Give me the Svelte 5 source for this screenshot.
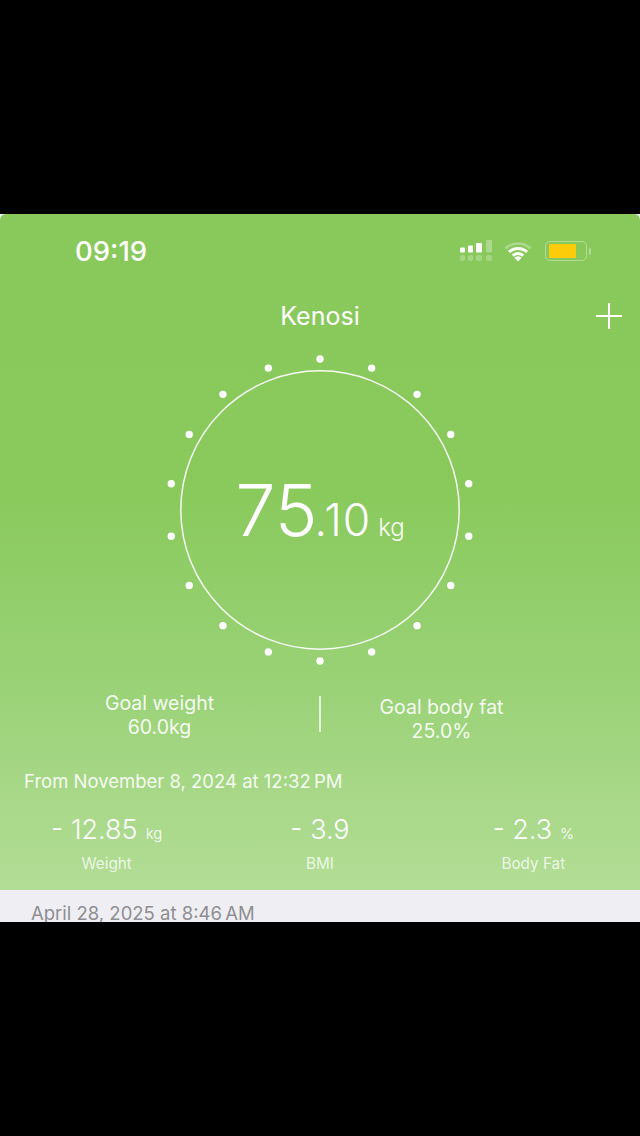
<script>
  const dots = Array.from({ length: 18 }, (_, i) => {
    const a = (i * 20 * Math.PI) / 180
    return { cx: 160 + 151 * Math.sin(a), cy: 160 - 151 * Math.cos(a) }
  })

  const stats = [
    { value: '- 12.85', unit: 'kg', label: 'Weight' },
    { value: '- 3.9', unit: '', label: 'BMI' },
    { value: '- 2.3', unit: '%', label: 'Body Fat' }
  ]
</script>

<div class="screen">
  <section class="hero">
    <div class="status">
      <span class="time">09:19</span>
      <div class="status-icons">
        <svg class="signal" width="34" height="24" viewBox="0 0 34 24">
          <g fill="#fff">
            <rect x="1" y="8.5" width="5" height="5" rx="1" />
            <rect x="9" y="6.5" width="5" height="7" rx="1" />
            <rect x="17" y="4" width="6" height="9.5" rx="1" />
          </g>
          <rect x="27" y="1" width="6" height="12.5" rx="1" fill="#fff" opacity=".3" />
          <g fill="#fff" opacity=".25">
            <rect x="1" y="16" width="5" height="6" rx="2" />
            <rect x="9" y="16" width="5" height="6" rx="2" />
            <rect x="17" y="16" width="6" height="6" rx="2" />
            <rect x="27" y="16" width="6" height="6" rx="2" />
          </g>
        </svg>
        <svg class="wifi" width="28" height="24" viewBox="0 0 28 24">
          <path d="M1.5 9.5a18 18 0 0 1 25 0" fill="none" stroke="#fff" stroke-width="2.6" opacity=".3" />
          <path d="M5 13a13 13 0 0 1 18 0" fill="none" stroke="#fff" stroke-width="3" />
          <path d="M8.8 16.6a7.5 7.5 0 0 1 10.4 0" fill="none" stroke="#fff" stroke-width="3" />
          <path d="M14 22.5l-3.6-3.8a5 5 0 0 1 7.2 0z" fill="#fff" />
        </svg>
        <div class="battery">
          <div class="battery-body"><div class="battery-fill"></div></div>
          <div class="battery-cap"></div>
        </div>
      </div>
    </div>

    <header class="title-bar">
      <h1>Kenosi</h1>
      <svg class="add" width="28" height="28" viewBox="0 0 28 28">
        <path d="M14 1v26M1 14h26" stroke="#fff" stroke-width="2" fill="none" />
      </svg>
    </header>

    <div class="gauge">
      <svg class="ring" width="320" height="320" viewBox="0 0 320 320">
        <circle cx="160" cy="160" r="139.2" fill="none" stroke="#fff" stroke-opacity=".92" stroke-width="1.5" />
        {#each dots as d}
          <circle cx={d.cx} cy={d.cy} r="3.7" fill="#fff" />
        {/each}
      </svg>
      <div class="reading">
        <span class="whole">75</span><span class="decimal">.10</span><span class="kg">kg</span>
      </div>
    </div>

    <div class="goals">
      <div class="goal">
        <div>Goal weight</div>
        <div>60.0kg</div>
      </div>
      <div class="divider"></div>
      <div class="goal second">
        <div>Goal body fat</div>
        <div>25.0%</div>
      </div>
    </div>

    <p class="from">From November 8, 2024 at 12:32&#8239;PM</p>

    <div class="stats">
      {#each stats as s}
        <div class="stat">
          <div class="stat-value">{s.value}{#if s.unit}<span class="stat-unit">{s.unit}</span>{/if}</div>
          <div class="stat-label">{s.label}</div>
        </div>
      {/each}
    </div>
  </section>

  <div class="list-head">April 28, 2025 at 8:46&#8239;AM</div>
</div>

<style>
  :global(body) {
    background: #000;
  }

  .screen {
    margin-top: 214px;
    width: 640px;
    height: 708px;
    overflow: hidden;
    background: #efeef2;
    font-family: Inter, "Liberation Sans", sans-serif;
    color: #fff;
  }

  .hero {
    height: 676px;
    display: flex;
    flex-direction: column;
    border-radius: 6px 6px 0 0;
    background: linear-gradient(180deg, #89c95b 0%, #8aca5d 42%, #9ad277 70%, #b3dd96 100%);
  }

  .status {
    height: 74px;
    display: flex;
    align-items: center;
    justify-content: space-between;
    padding: 0 49px 0 75px;
  }

  .time {
    font-size: 27.5px;
    font-weight: 500;
  }

  .status-icons {
    display: flex;
    align-items: center;
    gap: 9px;
  }

  .signal {
    margin-right: 2px;
  }

  .wifi {
    margin-right: 4px;
  }

  .battery {
    display: flex;
    align-items: center;
    gap: 2px;
  }

  .battery-body {
    box-sizing: content-box;
    width: 34px;
    height: 14px;
    padding: 2px 3px;
    border: 1.5px solid rgba(255, 255, 255, 0.35);
    border-radius: 5px;
  }

  .battery-fill {
    width: 27px;
    height: 100%;
    background: #fccb0a;
    border-radius: 1px;
  }

  .battery-cap {
    width: 2px;
    height: 7px;
    background: rgba(255, 255, 255, 0.35);
    border-radius: 0 2px 2px 0;
  }

  .title-bar {
    position: relative;
    height: 56px;
    display: flex;
    align-items: center;
    justify-content: center;
  }

  h1 {
    margin: 0;
    font-size: 25px;
    font-weight: 400;
  }

  .add {
    position: absolute;
    right: 17px;
    top: 14px;
  }

  .gauge {
    position: relative;
    height: 320px;
    margin-top: 6px;
    display: flex;
    align-items: center;
    justify-content: center;
  }

  .ring {
    position: absolute;
    left: 160px;
    top: 0;
  }

  .reading {
    display: flex;
    align-items: baseline;
    font-weight: 340;
  }

  .whole {
    font-size: 72px;
    line-height: 80px;
  }

  .decimal {
    font-size: 44.5px;
    margin-left: -3px;
    letter-spacing: 1px;
    font-weight: 300;
  }

  .kg {
    font-size: 24px;
    margin-left: 7px;
    font-weight: 300;
    color: rgba(255, 255, 255, 0.95);
  }

  .goals {
    display: grid;
    grid-template-columns: 319px 2px 241px;
    height: 48px;
    margin-top: 21px;
  }

  .goal {
    text-align: center;
    font-size: 19.5px;
    line-height: 24px;
    color: rgba(255, 255, 255, 0.92);
  }

  .goal.second {
    margin-top: 4px;
  }

  .divider {
    margin-top: 5px;
    height: 36px;
    background: rgba(255, 255, 255, 0.75);
    width: 1.5px;
  }

  .from {
    margin: 30px 0 0 24px;
    font-size: 18.5px;
    line-height: 24px;
    color: rgba(255, 255, 255, 0.92);
  }

  .stats {
    display: grid;
    grid-template-columns: repeat(3, 1fr);
    margin-top: 21px;
  }

  .stat {
    text-align: center;
  }

  .stat-value {
    height: 32px;
    font-size: 27px;
    line-height: 32px;
    font-weight: 300;
  }

  .stat-unit {
    font-size: 15px;
    line-height: 14px;
    margin-left: 8px;
    font-weight: 300;
  }

  .stat-label {
    margin-top: 8px;
    font-size: 15.3px;
    line-height: 20px;
    color: rgba(255, 255, 255, 0.78);
  }

  .list-head {
    padding: 12px 0 0 31px;
    font-size: 18.5px;
    line-height: 22px;
    color: #8e8e93;
  }
</style>
